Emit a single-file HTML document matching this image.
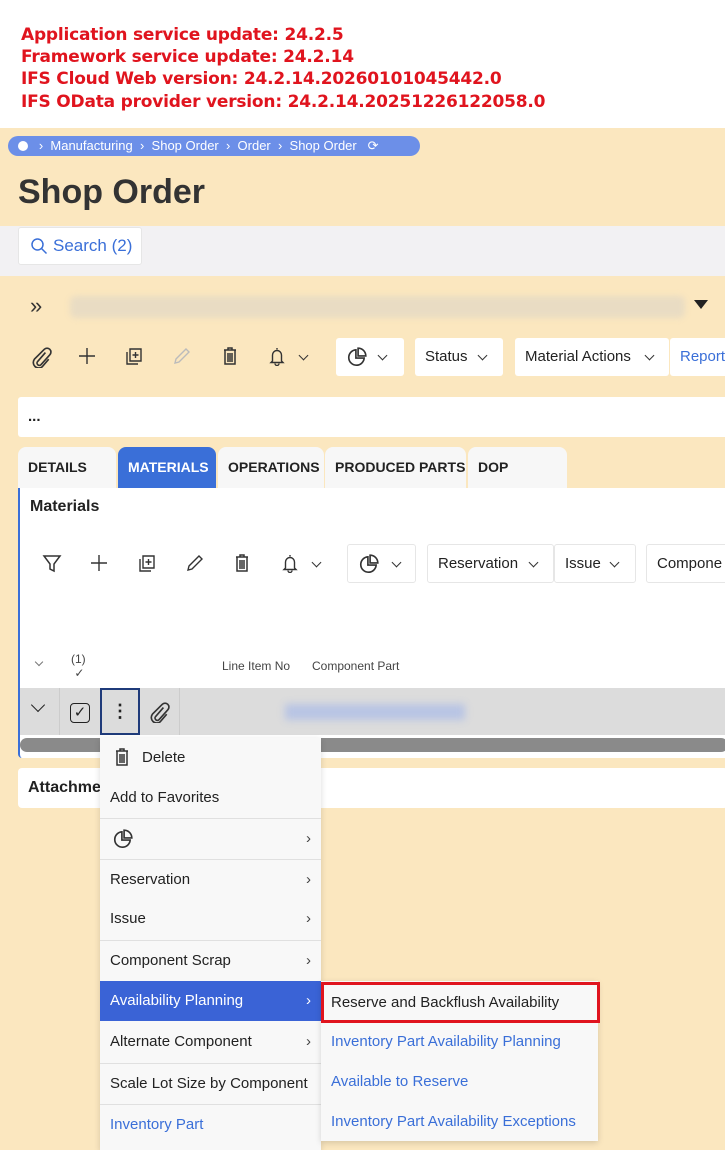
<!DOCTYPE html>
<html><head><meta charset="utf-8"><style>
*{box-sizing:border-box;margin:0;padding:0}
body{width:725px;height:1150px;overflow:hidden;background:#fbe7bf;font-family:"Liberation Sans",sans-serif;position:relative;color:#222}
.abs{position:absolute}
.hdr{left:0;top:0;width:725px;height:128px;background:#fff}
.hdr div{position:absolute;left:21px;color:#e0141e;font-weight:bold;font-size:17px;font-family:"DejaVu Sans","Liberation Sans",sans-serif;letter-spacing:-0.2px}
.bc{left:8px;top:136px;width:412px;height:20px;border-radius:10px;background:#6c8fe8;color:#fff;font-size:13px;line-height:20px;padding-left:10px}
.btn{background:#fff;border-radius:3px;font-size:15px;line-height:40px;padding-left:10px;color:#222}
.tab{top:447px;height:41px;background:#f7f7f7;border-radius:8px 8px 0 0;font-size:14px;font-weight:bold;line-height:41px;padding-left:10px;color:#222}
.mi{position:absolute;left:100px;width:221px;height:40px;font-size:15px;line-height:40px;padding-left:10px;color:#222}
.sep{border-top:1px solid #e0e0e0}
.chev{position:absolute;right:10px;top:0;font-size:15px;color:#444}
.si{position:absolute;left:321px;width:277px;height:40px;font-size:15px;line-height:40px;padding-left:10px;color:#3a6fd8}
svg{position:absolute;fill:none;stroke:#333;stroke-width:1.5}
.dd{position:absolute;width:7px;height:7px;border-right:1.3px solid #333;border-bottom:1.3px solid #333;transform:rotate(45deg)}
</style></head><body>
<svg width="0" height="0" style="position:absolute"><defs>
<symbol id="pie" viewBox="0 0 20 20"><path d="M9 3.5A7 7 0 1 0 16.5 11H9Z" fill="none" stroke="#333" stroke-width="1.5"/><path d="M11 2v7h7A7 7 0 0 0 11 2Z" fill="none" stroke="#333" stroke-width="1.5"/></symbol>
<symbol id="trash" viewBox="0 0 20 20"><path d="M4 4h12M8 4V2h4v2M5 4v14h10V4M8 7v9M10 7v9M12 7v9" fill="none" stroke="#333" stroke-width="1.5"/></symbol>
<symbol id="copy" viewBox="0 0 20 20"><path d="M6 3h11v12H6ZM3 6v12h11M11.5 6v6M8.5 9h6" fill="none" stroke="#333" stroke-width="1.4"/></symbol>
<symbol id="bell" viewBox="0 0 20 20"><path d="M10 2v1.5M5.5 15V9a4.5 4.5 0 0 1 9 0v6l1.5 1.5H4L5.5 15ZM8 17.5a2 2 0 0 0 4 0" fill="none" stroke="#333" stroke-width="1.4"/></symbol>
<symbol id="clip" viewBox="0 0 20 20"><path d="M14 6l-7 8a2 2 0 0 0 3 3l8-9a3.5 3.5 0 0 0-5-5L4 12a5 5 0 0 0 7 7l6-7" fill="none" stroke="#333" stroke-width="1.5"/></symbol>
<symbol id="pen" viewBox="0 0 20 20"><path d="M3 17l1-4L14 3l3 3L7 16Z" fill="none" stroke-width="1.4"/></symbol>
<symbol id="plus" viewBox="0 0 20 20"><path d="M10 2v16M2 10h16" fill="none" stroke="#333" stroke-width="1.4"/></symbol>
</defs></svg>
<div class="abs hdr">
<div style="top:25px">Application service update: 24.2.5</div>
<div style="top:47px">Framework service update: 24.2.14</div>
<div style="top:69px">IFS Cloud Web version: 24.2.14.20260101045442.0</div>
<div style="top:92px">IFS OData provider version: 24.2.14.20251226122058.0</div>
</div>
<div class="abs bc"><span style="display:inline-block;width:10px;height:10px;border-radius:5px;background:#fff;vertical-align:-1px"></span>&nbsp;&nbsp; ›&nbsp; Manufacturing&nbsp; ›&nbsp; Shop Order&nbsp; ›&nbsp; Order&nbsp; ›&nbsp; Shop Order&nbsp;&nbsp; ⟳</div>
<div class="abs" style="left:18px;top:173px;font-size:34px;font-weight:bold;color:#333">Shop Order</div>
<div class="abs" style="left:0;top:226px;width:725px;height:50px;background:#f2f1f3"></div>
<div class="abs btn" style="left:18px;top:227px;width:124px;height:38px;line-height:36px;color:#3a6fd8;font-size:17px;border:1px solid #e6e6e6;padding-left:34px">Search (2)</div>
<svg style="left:30px;top:237px" width="18" height="18" viewBox="0 0 18 18"><circle cx="7.5" cy="7.5" r="5.5" stroke="#3a6fd8"/><path d="M11.5 11.5l5 5" stroke="#3a6fd8"/></svg>
<div class="abs" style="left:30px;top:293px;font-size:22px;color:#333">»</div>
<div class="abs" style="left:70px;top:296px;width:615px;height:22px;background:#e9dcc3;border-radius:6px;filter:blur(3px)"></div>
<div class="abs" style="left:694px;top:300px;width:0;height:0;border-left:7px solid transparent;border-right:7px solid transparent;border-top:9px solid #222"></div>
<!-- toolbar 1 -->
<svg style="left:30px;top:346px" width="22" height="22"><use href="#clip"/></svg>
<svg style="left:77px;top:346px" width="20" height="20"><use href="#plus"/></svg>
<svg style="left:124px;top:346px" width="20" height="20"><use href="#copy"/></svg>
<svg style="left:172px;top:346px;stroke:#bbb" width="20" height="20"><use href="#pen"/></svg>
<svg style="left:220px;top:346px" width="20" height="20"><use href="#trash"/></svg>
<svg style="left:267px;top:346px" width="20" height="20"><use href="#bell"/></svg>
<div class="dd" style="left:300px;top:352px"></div>
<div class="abs btn" style="left:336px;top:338px;width:68px;height:38px"></div>
<svg style="left:346px;top:346px" width="22" height="22"><use href="#pie"/></svg>
<div class="dd" style="left:379px;top:352px"></div>
<div class="abs btn" style="left:415px;top:338px;width:88px;height:38px;line-height:38px">Status</div>
<div class="dd" style="left:479px;top:352px"></div>
<div class="abs btn" style="left:515px;top:338px;width:154px;height:38px;line-height:38px">Material Actions</div>
<div class="dd" style="left:646px;top:352px"></div>
<div class="abs btn" style="left:670px;top:338px;width:60px;height:38px;line-height:38px;color:#3a6fd8">Report</div>
<div class="abs btn" style="left:18px;top:397px;width:710px;height:40px;font-weight:bold">...</div>
<!-- tabs -->
<div class="abs tab" style="left:18px;width:98px">DETAILS</div>
<div class="abs tab" style="left:118px;width:98px;background:#3a6fd8;color:#fff">MATERIALS</div>
<div class="abs tab" style="left:218px;width:106px">OPERATIONS</div>
<div class="abs tab" style="left:325px;width:141px">PRODUCED PARTS</div>
<div class="abs tab" style="left:468px;width:99px">DOP</div>
<div class="abs" style="left:18px;top:488px;width:710px;height:270px;background:#fff;border-left:2px solid #3a6fd8;border-radius:0 0 0 4px"></div>
<div class="abs" style="left:30px;top:498px;font-size:16px;font-weight:bold;color:#222">Materials</div>
<svg style="left:42px;top:553px" width="20" height="20" viewBox="0 0 20 20"><path d="M2 3h16l-6 8v7l-4-2v-5Z"/></svg>
<svg style="left:89px;top:553px" width="20" height="20"><use href="#plus"/></svg>
<svg style="left:137px;top:553px" width="20" height="20"><use href="#copy"/></svg>
<svg style="left:185px;top:553px;stroke:#333" width="20" height="20"><use href="#pen"/></svg>
<svg style="left:232px;top:553px" width="20" height="20"><use href="#trash"/></svg>
<svg style="left:280px;top:553px" width="20" height="20"><use href="#bell"/></svg>
<div class="dd" style="left:313px;top:559px"></div>
<div class="abs btn" style="left:347px;top:544px;width:69px;height:39px;border:1px solid #e6e6e6"></div>
<svg style="left:358px;top:553px" width="22" height="22"><use href="#pie"/></svg>
<div class="dd" style="left:393px;top:559px"></div>
<div class="abs btn" style="left:427px;top:544px;width:127px;height:39px;line-height:37px;border:1px solid #e6e6e6">Reservation</div>
<div class="dd" style="left:530px;top:559px"></div>
<div class="abs btn" style="left:554px;top:544px;width:82px;height:39px;line-height:37px;border:1px solid #e6e6e6">Issue</div>
<div class="dd" style="left:611px;top:559px"></div>
<div class="abs btn" style="left:646px;top:544px;width:90px;height:39px;line-height:37px;border:1px solid #e6e6e6">Compone</div>
<div class="dd" style="left:36px;top:659px;border-color:#777;width:6px;height:6px"></div>
<div class="abs" style="left:71px;top:652px;font-size:12px;color:#444">(1)<br>&nbsp;✓</div>
<div class="abs" style="left:222px;top:659px;font-size:12px;color:#444">Line Item No</div>
<div class="abs" style="left:312px;top:659px;font-size:12px;color:#444">Component Part</div>
<div class="abs" style="left:20px;top:688px;width:708px;height:47px;background:#dcdcdc"></div>
<div class="abs" style="left:59px;top:688px;width:1px;height:47px;background:#ccc"></div>
<div class="abs" style="left:179px;top:688px;width:1px;height:47px;background:#ccc"></div>
<div class="dd" style="left:33px;top:700px;width:10px;height:10px;border-color:#222"></div>
<div class="abs" style="left:70px;top:703px;width:20px;height:20px;border:1.5px solid #222;border-radius:4px;font-size:15px;line-height:17px;text-align:center">✓</div>
<div class="abs" style="left:100px;top:688px;width:40px;height:47px;border:2px solid #1f3b7a;font-size:18px;font-weight:bold;text-align:center;line-height:43px">⋮</div>
<svg style="left:148px;top:701px" width="22" height="22"><use href="#clip"/></svg>
<div class="abs" style="left:285px;top:704px;width:180px;height:16px;background:#b8c4e4;filter:blur(4px)"></div>
<div class="abs" style="left:20px;top:738px;width:708px;height:14px;background:#8a8a8a;border-radius:7px"></div>
<div class="abs" style="left:18px;top:768px;width:710px;height:40px;background:#fff;border-radius:4px;font-size:16px;font-weight:bold;line-height:40px;padding-left:10px">Attachments</div>
<!-- menu -->
<div class="abs" style="left:100px;top:738px;width:221px;height:412px;background:#f8f8f8;box-shadow:0 2px 6px rgba(0,0,0,.15)"></div>
<div class="mi" style="top:738px;padding-left:42px">Delete</div>
<svg style="left:112px;top:747px" width="20" height="20"><use href="#trash"/></svg>
<div class="mi" style="top:778px">Add to Favorites</div>
<div class="mi sep" style="top:818px"><span class="chev">›</span></div>
<svg style="left:112px;top:828px" width="22" height="22"><use href="#pie"/></svg>
<div class="mi sep" style="top:859px">Reservation<span class="chev">›</span></div>
<div class="mi" style="top:899px">Issue<span class="chev">›</span></div>
<div class="mi sep" style="top:940px">Component Scrap<span class="chev">›</span></div>
<div class="mi" style="top:981px;background:#3a63d6;color:#fff">Availability Planning<span class="chev" style="color:#fff">›</span></div>
<div class="mi" style="top:1022px">Alternate Component<span class="chev">›</span></div>
<div class="mi sep" style="top:1063px">Scale Lot Size by Component</div>
<div class="mi sep" style="top:1104px;color:#3a6fd8">Inventory Part</div>
<!-- submenu -->
<div class="abs" style="left:321px;top:981px;width:277px;height:160px;background:#f8f8f8;box-shadow:0 2px 6px rgba(0,0,0,.15)"></div>
<div class="si" style="top:982px;color:#222;border:3px solid #e0141e;width:279px;height:41px;line-height:35px;padding-left:7px">Reserve and Backflush Availability</div>
<div class="si" style="top:1022px">Inventory Part Availability Planning</div>
<div class="si" style="top:1062px">Available to Reserve</div>
<div class="si" style="top:1102px">Inventory Part Availability Exceptions</div>
</body></html>
